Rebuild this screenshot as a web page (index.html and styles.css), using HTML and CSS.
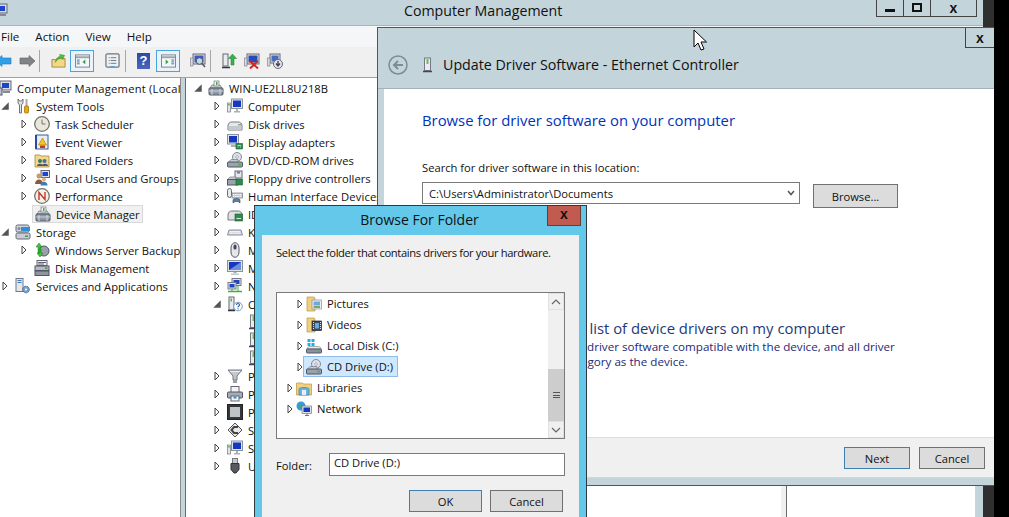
FILE: index.html
```html
<!DOCTYPE html>
<html lang="en">
<head>
    <meta charset="UTF-8">
    <title>Computer Management</title>
    <link rel="stylesheet" href="styles.css">
</head>
<body>
<svg class="sprite" width="0" height="0">
    <defs>
        <symbol id="tw-closed" viewBox="0 0 6 10"><path d="M1 1l4 4-4 4z" fill="#fff" stroke="#444"/></symbol>
        <symbol id="tw-open" viewBox="0 0 8 8"><path d="M7 1v6H1z" fill="#555"/></symbol>

        <symbol id="i-mgmt" viewBox="0 0 16 16"><rect x="4" y="1" width="11" height="9" fill="#d8dde2" stroke="#667"/><rect x="6" y="3" width="7" height="5" fill="#1c46c8"/><rect x="1" y="8" width="5" height="7" fill="#bcc4cc" stroke="#556"/><rect x="7" y="11" width="7" height="2" fill="#889"/></symbol>
        <symbol id="i-tools" viewBox="0 0 16 16"><path d="M3 1v4l1.500 2v8h2V7L8 5V1L6.500 3h-2z" fill="#dfe3e6" stroke="#555" stroke-width=".8"/><rect x="10.500" y="1" width="2" height="7" fill="#aab"/><rect x="9.500" y="8" width="4" height="7" rx="1" fill="#e8a90f" stroke="#9a6c00" stroke-width=".7"/></symbol>
        <symbol id="i-clock" viewBox="0 0 16 16"><circle cx="8" cy="8" r="7.300" fill="#e9e6dc" stroke="#77736a" stroke-width="1.300"/><path d="M8 3.500V8h3.500" fill="none" stroke="#77736a"/></symbol>
        <symbol id="i-event" viewBox="0 0 16 16"><rect x="2" y="1" width="12" height="14" fill="#e8edf5" stroke="#3a5a98"/><path d="M2 1v14" stroke="#2b4aa6" stroke-width="2"/><path d="M8.500 4l4 7h-8z" fill="#f2c81e" stroke="#a87a00" stroke-width=".6"/><rect x="6" y="11.500" width="5" height="2.500" fill="#c8352a"/></symbol>
        <symbol id="i-share" viewBox="0 0 16 16"><path d="M1 3h5l1 1h8v11H1z" fill="#f0d98c" stroke="#a48a3e" stroke-width=".8"/><circle cx="6" cy="9" r="2" fill="#3b7a57"/><circle cx="10.500" cy="9" r="2" fill="#3a6fb0"/><path d="M3 14c0-3 6-3 6 0zM8 14c0-3 6-3 6 0z" fill="#557"/></symbol>
        <symbol id="i-users" viewBox="0 0 16 16"><rect x="7" y="0.500" width="8.500" height="7" fill="#dfe4ea" stroke="#667"/><rect x="8.500" y="2" width="5.500" height="4" fill="#1c46c8"/><circle cx="5" cy="6" r="2.500" fill="#c89a6a"/><path d="M1 14c0-6 8-6 8 0z" fill="#8a5a3a"/><circle cx="10" cy="9.500" r="2" fill="#d9b080"/><path d="M6.500 15.500c0-5 7-5 7 0z" fill="#3a7cc0"/></symbol>
        <symbol id="i-perf" viewBox="0 0 16 16"><circle cx="8" cy="8" r="7.300" fill="#f3f1ea" stroke="#77736a" stroke-width="1.300"/><path d="M5 12V4.500l6 7V4" fill="none" stroke="#c8352a" stroke-width="1.400"/></symbol>
        <symbol id="i-server" viewBox="0 0 16 16"><path d="M2 8l2-3h8l2 3z" fill="#cfd4d9" stroke="#667" stroke-width=".7"/><rect x="6" y="1" width="5" height="5" fill="#eef2ee" stroke="#778" stroke-width=".7"/><rect x="8" y="2" width="1.500" height="3" fill="#4aa84a"/><rect x="1" y="8" width="14" height="7" rx="1" fill="#8c98a4" stroke="#556"/><path d="M1 11h14M4 9v6M12 9v6" stroke="#dfe4e8" stroke-width=".8"/></symbol>
        <symbol id="i-storage" viewBox="0 0 16 16"><rect x="1" y="9" width="14" height="6" rx="1.500" fill="#c8cdd2" stroke="#667"/><rect x="10" y="11.500" width="3" height="1.500" fill="#44a044"/><rect x="1" y="1" width="13" height="7" rx="1.500" fill="#d2d7dc" stroke="#667"/><rect x="6" y="3" width="9" height="4" fill="#2f8fd8"/><circle cx="4" cy="4.500" r="1.500" fill="#889"/></symbol>
        <symbol id="i-backup" viewBox="0 0 16 16"><circle cx="10" cy="9" r="5" fill="#99a0a8" stroke="#556"/><path d="M5 1l3 4H6v6H4V5H2zM6 15l-3-4h2V7h2v4h2z" fill="#3cc43c" stroke="#1f7a1f" stroke-width=".5"/></symbol>
        <symbol id="i-diskm" viewBox="0 0 16 16"><rect x="3" y="0.500" width="10" height="5" fill="#eef0f2" stroke="#667"/><path d="M4 2.500h8M4 4h6" stroke="#445" stroke-width=".8"/><rect x="1" y="6" width="14" height="4.500" fill="#b6bcc2" stroke="#556"/><rect x="11" y="7.500" width="2.500" height="1.500" fill="#44a044"/><rect x="1" y="11" width="14" height="4.500" fill="#8e969e" stroke="#556"/></symbol>
        <symbol id="i-services" viewBox="0 0 16 16"><rect x="1" y="0.500" width="7" height="13" fill="#e4e8ec" stroke="#778"/><path d="M2.500 2.500h4M2.500 4.500h4" stroke="#3a7cc0"/><circle cx="11" cy="11.500" r="3.300" fill="#7aa0c8" stroke="#3a5a88" stroke-dasharray="1.200 .6"/><circle cx="11" cy="11.500" r="1.100" fill="#fff"/></symbol>
        <symbol id="i-computer" viewBox="0 0 16 16"><rect x="0.500" y="5" width="3" height="9" fill="#e2e6e8" stroke="#778" stroke-width=".7"/><rect x="1.200" y="6" width="1.500" height="1.500" fill="#44b044"/><rect x="4.500" y="1" width="11" height="9.500" fill="#e2e6ea" stroke="#8a929a"/><rect x="6" y="2.500" width="8" height="6.500" fill="#1638c0"/><path d="M9 11h2v2h2v1.500H7V13h2z" fill="#a8b0b8"/></symbol>
        <symbol id="i-disk" viewBox="0 0 16 16"><path d="M1 10c0-3 2-4 4-4h6c2 0 4 1 4 4v4H1z" fill="#e6e8ea" stroke="#778"/><rect x="1.500" y="10" width="13" height="4" fill="#c4c9ce"/><rect x="11" y="8" width="3" height="1.500" fill="#8a9"/></symbol>
        <symbol id="i-display" viewBox="0 0 16 16"><rect x="0.500" y="0.500" width="11" height="9.500" fill="#e2e6ea" stroke="#8a929a"/><rect x="2" y="2" width="8" height="6.500" fill="#1638c0"/><rect x="4" y="11" width="5" height="2" fill="#a8b0b8"/><rect x="9" y="9.500" width="6.500" height="5.500" fill="#2f8a4e" stroke="#1e5a34" stroke-width=".6"/><path d="M10.500 13h1M13 13h1M10.500 11.500h3.500" stroke="#dcead8" stroke-width=".8"/></symbol>
        <symbol id="i-dvd" viewBox="0 0 16 16"><circle cx="10" cy="5" r="4.500" fill="#dde2e8" stroke="#889"/><circle cx="10" cy="5" r="1.300" fill="#fff" stroke="#889" stroke-width=".6"/><path d="M1 10.500l3-3h7v3z" fill="#c8cdd2" stroke="#778" stroke-width=".7"/><rect x="0.500" y="10" width="15" height="5" rx="1" fill="#9aa2aa" stroke="#556"/><rect x="11" y="11.800" width="3" height="1.500" fill="#4ab04a"/></symbol>
        <symbol id="i-floppy" viewBox="0 0 16 16"><rect x="8" y="1" width="7" height="7" fill="#e4e8ec" stroke="#667"/><rect x="10" y="1.500" width="3" height="2" fill="#778"/><path d="M1 9l2-2h6v3H1z" fill="#c8cdd2" stroke="#778" stroke-width=".7"/><rect x="0.500" y="9.500" width="10" height="5.500" fill="#9aa2aa" stroke="#556"/><rect x="9" y="9" width="6.500" height="6" fill="#2f8a4e" stroke="#1e5a34" stroke-width=".6"/></symbol>
        <symbol id="i-hid" viewBox="0 0 16 16"><rect x="0.500" y="0.500" width="4" height="9" rx="2" fill="#e8eaec" stroke="#667"/><rect x="5" y="5" width="10.500" height="5" fill="#c8ccd2" stroke="#778" stroke-width=".7"/><path d="M6 6.500h8.500M6 8.500h8.500" stroke="#fff" stroke-dasharray="1 .8"/><path d="M6 15v-3c0-2 7-2 7 0v3l-2-1.500H8z" fill="#5a80b0" stroke="#345" stroke-width=".6"/></symbol>
        <symbol id="i-ide" viewBox="0 0 16 16"><path d="M1 9c0-3 2-4 4-4h6c2 0 4 1 4 4v5H1z" fill="#dfe2e5" stroke="#778"/><rect x="8" y="8" width="7.500" height="7" fill="#2f8a4e" stroke="#1e5a34" stroke-width=".6"/><path d="M9.500 12.500h4.500" stroke="#dcead8"/></symbol>
        <symbol id="i-keyboard" viewBox="0 0 16 16"><path d="M2 6h12l1.500 5h-15z" fill="#d6dade" stroke="#778" stroke-width=".8"/><path d="M3 7.500h10M2.500 9.300h11" stroke="#fff" stroke-dasharray="1 .6"/></symbol>
        <symbol id="i-mouse" viewBox="0 0 16 16"><path d="M4 6c0-7 8-7 8 0v4c0 7-8 7-8 0z" fill="#e4e6ea" stroke="#556"/><rect x="6.500" y="2.500" width="3" height="5" rx="1.500" fill="#445"/></symbol>
        <symbol id="i-monitor" viewBox="0 0 16 16"><rect x="0.500" y="0.500" width="15" height="11" fill="#dfe3e8" stroke="#8a929a"/><rect x="2" y="2" width="12" height="8" fill="#1638c0"/><path d="M2 10l12-8v8z" fill="#6c8ce0"/><rect x="6.500" y="12" width="3" height="1.500" fill="#a8b0b8"/><rect x="4" y="13.500" width="8" height="1.500" fill="#c4c9ce"/></symbol>
        <symbol id="i-network" viewBox="0 0 16 16"><rect x="5" y="0.500" width="9" height="7" fill="#dfe3e8" stroke="#778"/><rect x="6.500" y="2" width="6" height="4" fill="#1c46c8"/><rect x="1" y="4.500" width="8" height="6.500" fill="#dfe3e8" stroke="#778"/><rect x="2.500" y="6" width="5" height="3.500" fill="#1c46c8"/><path d="M1 13.500h14" stroke="#3cb03c" stroke-width="1.500"/><path d="M5 11v2M11 8v5" stroke="#3cb03c"/></symbol>
        <symbol id="i-other" viewBox="0 0 16 16"><rect x="2" y="1" width="5" height="13" fill="#e8ecea" stroke="#667"/><rect x="3.500" y="2.500" width="1.500" height="3" fill="#5ab05a"/><path d="M1 14.500h7" stroke="#334" stroke-width="1.500"/><circle cx="11" cy="10.500" r="4.300" fill="#fff" stroke="#7a9ac0"/><path d="M9.500 9c0-2 3-2 3 0 0 1-1.500 1-1.500 2.300M11 12.300v1" fill="none" stroke="#2b5aa6" stroke-width="1.100"/></symbol>
        <symbol id="i-eth" viewBox="0 0 16 16"><rect x="4.500" y="1" width="6" height="12.500" fill="#e8ecea" stroke="#778"/><rect x="6.500" y="2" width="2" height="5" fill="#66c05a"/><path d="M3 14.500h9" stroke="#445" stroke-width="1.500"/></symbol>
        <symbol id="i-port" viewBox="0 0 16 16"><path d="M1 2h14l-5 6v4H6V8z" fill="#c4c8cc" stroke="#778"/><rect x="6" y="12" width="4" height="3" fill="#99a0a6"/><path d="M3 3.500h10" stroke="#eee"/></symbol>
        <symbol id="i-printer" viewBox="0 0 16 16"><rect x="4" y="0.500" width="8" height="6" fill="#f2f4f6" stroke="#667"/><rect x="0.500" y="6" width="15" height="6" rx="1" fill="#a4acb4" stroke="#556"/><rect x="4" y="10" width="8" height="5" fill="#f2f4f6" stroke="#667"/><rect x="6.500" y="10.500" width="3" height="2" fill="#2f8fd8"/></symbol>
        <symbol id="i-cpu" viewBox="0 0 16 16"><rect x="0.500" y="0.500" width="15" height="15" fill="#34383c" stroke="#222"/><rect x="3" y="3" width="10" height="10" fill="#c0c4c8"/></symbol>
        <symbol id="i-soft" viewBox="0 0 16 16"><path d="M8 1l7 7-7 7-7-7z" fill="#e8e8e8" stroke="#555"/><path d="M11 5H7L4.500 8 7 11h4" fill="none" stroke="#444" stroke-width="2"/></symbol>
        <symbol id="i-usb" viewBox="0 0 16 16"><rect x="5.500" y="0.500" width="5" height="5" fill="#c4c8cc" stroke="#778"/><path d="M4 5.500h8v6l-3 3.500H7l-3-3.500z" fill="#55595e" stroke="#333"/></symbol>

        <symbol id="i-pictures" viewBox="0 0 16 16"><path d="M1 1h7l1 1v13H1z" fill="#f0d07c" stroke="#b8983e" stroke-width=".7"/><rect x="6" y="4" width="9.500" height="9" fill="#eef2f6" stroke="#889" stroke-width=".7"/><rect x="7.500" y="5.500" width="6.500" height="4" fill="#6ea8d8"/><path d="M7.500 11h6.500" stroke="#7aa860" stroke-width="2"/></symbol>
        <symbol id="i-videos" viewBox="0 0 16 16"><path d="M1 1h7l1 1v13H1z" fill="#f0d07c" stroke="#b8983e" stroke-width=".7"/><rect x="6" y="4" width="9.500" height="9.500" fill="#3a4a5e" stroke="#223" stroke-width=".7"/><rect x="9" y="6" width="4" height="5.500" fill="#6ea8d8"/><path d="M7.500 5v8M14.500 5v8" stroke="#dde" stroke-dasharray="1 1"/></symbol>
        <symbol id="i-cdisk" viewBox="0 0 16 16"><rect x="1.500" y="1" width="3" height="3" fill="#18b0ec"/><rect x="5.500" y="1" width="3" height="3" fill="#18b0ec"/><rect x="1.500" y="5" width="3" height="3" fill="#18b0ec"/><rect x="5.500" y="5" width="3" height="3" fill="#18b0ec"/><path d="M1 10l2-1.500h10l2 1.500v1H1z" fill="#e8eaec" stroke="#8a9098" stroke-width=".7"/><rect x="0.500" y="11" width="15" height="4" rx="1" fill="#8a949e" stroke="#556"/><rect x="11.500" y="12.500" width="2.500" height="1.200" fill="#4ab04a"/></symbol>
        <symbol id="i-libraries" viewBox="0 0 16 16"><path d="M0.500 3h6l1 1h8v11H.5z" fill="#f0d07c" stroke="#b8983e" stroke-width=".7"/><path d="M3 15V9c0-2 10-2 10 0v6z" fill="#6ab4e0" stroke="#3a7cb0" stroke-width=".7"/><rect x="6" y="10" width="4" height="5" fill="#e8eef4"/></symbol>
        <symbol id="i-globe" viewBox="0 0 16 16"><circle cx="5" cy="5" r="4.500" fill="#3a9ad8"/><path d="M2 2.500c3 0 3 3 1 4 2 1 3 0 4-2" fill="#3cb043"/><rect x="6" y="5" width="9.500" height="7.500" fill="#dfe3e8" stroke="#778" stroke-width=".7"/><rect x="7.500" y="6.500" width="6.500" height="4.500" fill="#1638c0"/><path d="M9 14.500h4M11 12.500v2" stroke="#778"/></symbol>

        <symbol id="t-folder" viewBox="0 0 16 16"><path d="M1 7h4l1-1h9v9H1z" fill="#f2d888" stroke="#a48a3e"/><path d="M4.500 10c.5-4 3-6 5.500-6.500L9 1.500l5.500 1-2 4.500-1-2c-2.500.5-5 2-7 5z" fill="#4fc23a" stroke="#2a8a2a" stroke-width=".5"/></symbol>
        <symbol id="t-pane" viewBox="0 0 16 14"><rect x="0.500" y="0.500" width="15" height="13" fill="#f4f6f8" stroke="#7a8288"/><path d="M1 3h14" stroke="#9aa2aa" stroke-width="2"/><path d="M2 6h3M2 8h3M2 10h3" stroke="#3a6fa8"/><path d="M11 5.500v5L8 8z" fill="#2ea043"/></symbol>
        <symbol id="t-pane2" viewBox="0 0 16 14"><rect x="0.500" y="0.500" width="15" height="13" fill="#f4f6f8" stroke="#7a8288"/><path d="M1 3h14" stroke="#9aa2aa" stroke-width="2"/><path d="M11 6h3M11 8h3M11 10h3" stroke="#3a6fa8"/><path d="M5 5.500v5L8 8z" fill="#2ea043"/></symbol>
        <symbol id="t-doc" viewBox="0 0 16 16"><rect x="1" y="1" width="14" height="14" rx="1.500" fill="#eef1f3" stroke="#6e757b" stroke-width="1.300"/><path d="M4 5h1M6 5h6M4 8h1M6 8h6M4 11h1M6 11h6" stroke="#6a7680"/><path d="M6 14.500h4" stroke="#3fa0dc"/></symbol>
        <symbol id="t-search" viewBox="0 0 16 16"><rect x="3" y="1" width="12" height="10" fill="#dfe3e8" stroke="#667"/><rect x="4.500" y="2.500" width="9" height="7" fill="#3a5ac0"/><circle cx="9.500" cy="8" r="3.300" fill="#bcd8ee" stroke="#556"/><path d="M12 10.500l3 3.500" stroke="#556" stroke-width="1.500"/><rect x="0.500" y="5" width="2.500" height="8" fill="#d6dadc" stroke="#778" stroke-width=".6"/></symbol>
        <symbol id="t-update" viewBox="0 0 16 16"><rect x="2" y="1" width="5" height="12" fill="#e8ecea" stroke="#667"/><path d="M1 14.500h8" stroke="#334" stroke-width="1.500"/><path d="M11.500 1l4 4.500H13V12h-3V5.500H7.500z" fill="#36b44a" stroke="#1f7a2f" stroke-width=".5"/></symbol>
        <symbol id="t-remove" viewBox="0 0 16 16"><rect x="3" y="1" width="12" height="10" fill="#dfe3e8" stroke="#667"/><rect x="4.500" y="2.500" width="9" height="7" fill="#2a4ab8"/><rect x="0.500" y="5" width="2.500" height="8" fill="#d6dadc" stroke="#778" stroke-width=".6"/><path d="M6 8l8 7.500M14 8l-8 7.500" stroke="#d8201c" stroke-width="2"/></symbol>
        <symbol id="t-install" viewBox="0 0 16 16"><rect x="3" y="1" width="10" height="9" fill="#dfe3e8" stroke="#667"/><rect x="4.500" y="2.500" width="7" height="6" fill="#4a6ac0"/><rect x="0.500" y="5" width="2.500" height="8" fill="#d6dadc" stroke="#778" stroke-width=".6"/><circle cx="11" cy="11" r="4.500" fill="#e4e6e8" stroke="#667"/><path d="M11 8v4M9 10.500l2 2.500 2-2.500" fill="none" stroke="#445" stroke-width="1.400"/></symbol>
    </defs>
</svg>

<div class="desktop">

    <div class="main-win">
        <div class="titlebar">
            <svg class="app-icon"><use href="#i-mgmt"/></svg>
            <span class="titlebar-text">Computer Management</span>
            <div class="win-btns">
                <span class="win-btn"><i class="ico-min"></i></span>
                <span class="win-btn btn-max"><i class="ico-max"></i></span>
                <span class="win-btn btn-x">x</span>
            </div>
        </div>
        <div class="menubar">
            <span>File</span><span>Action</span><span>View</span><span>Help</span>
        </div>
        <div class="toolbar">
            <svg class="tool-back" viewBox="0 0 16 12"><path d="M0 6l6-5.500V3h9v6H6v2.500z" fill="#2f9fe8" stroke="#1a7ac0" stroke-width=".6"/></svg>
            <svg class="tool-fwd" viewBox="0 0 16 12"><path d="M16 6l-6-5.500V3H1v6h9v2.500z" fill="#808488" stroke="#5a5e62" stroke-width=".6"/></svg>
            <i class="tool-sep"></i>
            <svg class="tool"><use href="#t-folder"/></svg>
            <span class="tool-on"><svg class="tool-in"><use href="#t-pane"/></svg></span>
            <svg class="tool tool-doc"><use href="#t-doc"/></svg>
            <i class="tool-sep sep2"></i>
            <span class="tool-help">?</span>
            <span class="tool-on on2"><svg class="tool-in"><use href="#t-pane2"/></svg></span>
            <svg class="tool tool-search"><use href="#t-search"/></svg>
            <i class="tool-sep sep3"></i>
            <svg class="tool tool-up"><use href="#t-update"/></svg>
            <svg class="tool tool-x"><use href="#t-remove"/></svg>
            <svg class="tool tool-x"><use href="#t-install"/></svg>
        </div>
        <div class="panes">
            <div class="pane-left">
                <div class="row lv0"><i class="tw"></i><svg class="ic"><use href="#i-mgmt"/></svg><span class="lbl wide-root">Computer Management (Local</span></div>
                <div class="row lv1"><svg class="tw"><use href="#tw-open"/></svg><svg class="ic"><use href="#i-tools"/></svg><span class="lbl">System Tools</span></div>
                <div class="row lv2"><svg class="tw"><use href="#tw-closed"/></svg><svg class="ic"><use href="#i-clock"/></svg><span class="lbl">Task Scheduler</span></div>
                <div class="row lv2"><svg class="tw"><use href="#tw-closed"/></svg><svg class="ic"><use href="#i-event"/></svg><span class="lbl">Event Viewer</span></div>
                <div class="row lv2"><svg class="tw"><use href="#tw-closed"/></svg><svg class="ic"><use href="#i-share"/></svg><span class="lbl">Shared Folders</span></div>
                <div class="row lv2"><svg class="tw"><use href="#tw-closed"/></svg><svg class="ic"><use href="#i-users"/></svg><span class="lbl">Local Users and Groups</span></div>
                <div class="row lv2"><svg class="tw"><use href="#tw-closed"/></svg><svg class="ic"><use href="#i-perf"/></svg><span class="lbl">Performance</span></div>
                <div class="row lv2"><i class="tw"></i><span class="sel-item"><svg class="ic"><use href="#i-server"/></svg><span class="lbl">Device Manager</span></span></div>
                <div class="row lv1"><svg class="tw"><use href="#tw-open"/></svg><svg class="ic"><use href="#i-storage"/></svg><span class="lbl">Storage</span></div>
                <div class="row lv2"><svg class="tw"><use href="#tw-closed"/></svg><svg class="ic"><use href="#i-backup"/></svg><span class="lbl">Windows Server Backup</span></div>
                <div class="row lv2"><i class="tw"></i><svg class="ic"><use href="#i-diskm"/></svg><span class="lbl">Disk Management</span></div>
                <div class="row lv1"><svg class="tw"><use href="#tw-closed"/></svg><svg class="ic"><use href="#i-services"/></svg><span class="lbl">Services and Applications</span></div>
            </div>
            <div class="pane-center">
                <div class="row lv1"><svg class="tw"><use href="#tw-open"/></svg><svg class="ic"><use href="#i-server"/></svg><span class="lbl">WIN-UE2LL8U218B</span></div>
                <div class="row lv2"><svg class="tw"><use href="#tw-closed"/></svg><svg class="ic"><use href="#i-computer"/></svg><span class="lbl">Computer</span></div>
                <div class="row lv2"><svg class="tw"><use href="#tw-closed"/></svg><svg class="ic"><use href="#i-disk"/></svg><span class="lbl">Disk drives</span></div>
                <div class="row lv2"><svg class="tw"><use href="#tw-closed"/></svg><svg class="ic"><use href="#i-display"/></svg><span class="lbl">Display adapters</span></div>
                <div class="row lv2"><svg class="tw"><use href="#tw-closed"/></svg><svg class="ic"><use href="#i-dvd"/></svg><span class="lbl">DVD/CD-ROM drives</span></div>
                <div class="row lv2"><svg class="tw"><use href="#tw-closed"/></svg><svg class="ic"><use href="#i-floppy"/></svg><span class="lbl">Floppy drive controllers</span></div>
                <div class="row lv2"><svg class="tw"><use href="#tw-closed"/></svg><svg class="ic"><use href="#i-hid"/></svg><span class="lbl wide">Human Interface Devices</span></div>
                <div class="row lv2"><svg class="tw"><use href="#tw-closed"/></svg><svg class="ic"><use href="#i-ide"/></svg><span class="lbl">IDE ATA/ATAPI controllers</span></div>
                <div class="row lv2"><svg class="tw"><use href="#tw-closed"/></svg><svg class="ic"><use href="#i-keyboard"/></svg><span class="lbl">Keyboards</span></div>
                <div class="row lv2"><svg class="tw"><use href="#tw-closed"/></svg><svg class="ic"><use href="#i-mouse"/></svg><span class="lbl">Mice and other pointing devices</span></div>
                <div class="row lv2"><svg class="tw"><use href="#tw-closed"/></svg><svg class="ic"><use href="#i-monitor"/></svg><span class="lbl">Monitors</span></div>
                <div class="row lv2"><svg class="tw"><use href="#tw-closed"/></svg><svg class="ic"><use href="#i-network"/></svg><span class="lbl">Network adapters</span></div>
                <div class="row lv2"><svg class="tw"><use href="#tw-open"/></svg><svg class="ic"><use href="#i-other"/></svg><span class="lbl">Other devices</span></div>
                <div class="row lv3"><i class="tw"></i><svg class="ic"><use href="#i-eth"/></svg><span class="lbl">Ethernet Controller</span></div>
                <div class="row lv3"><i class="tw"></i><svg class="ic"><use href="#i-eth"/></svg><span class="lbl">Ethernet Controller</span></div>
                <div class="row lv3"><i class="tw"></i><svg class="ic"><use href="#i-eth"/></svg><span class="lbl">Ethernet Controller</span></div>
                <div class="row lv2"><svg class="tw"><use href="#tw-closed"/></svg><svg class="ic"><use href="#i-port"/></svg><span class="lbl">Ports (COM &amp; LPT)</span></div>
                <div class="row lv2"><svg class="tw"><use href="#tw-closed"/></svg><svg class="ic"><use href="#i-printer"/></svg><span class="lbl">Print queues</span></div>
                <div class="row lv2"><svg class="tw"><use href="#tw-closed"/></svg><svg class="ic"><use href="#i-cpu"/></svg><span class="lbl">Processors</span></div>
                <div class="row lv2"><svg class="tw"><use href="#tw-closed"/></svg><svg class="ic"><use href="#i-soft"/></svg><span class="lbl">Software devices</span></div>
                <div class="row lv2"><svg class="tw"><use href="#tw-closed"/></svg><svg class="ic"><use href="#i-computer"/></svg><span class="lbl">System devices</span></div>
                <div class="row lv2"><svg class="tw"><use href="#tw-closed"/></svg><svg class="ic"><use href="#i-usb"/></svg><span class="lbl">Universal Serial Bus controllers</span></div>
            </div>
            <div class="pane-right"></div>
        </div>
    </div>

    <div class="update-win">
        <div class="update-top"><span class="win-btn close-solo">x</span></div>
        <div class="update-head">
            <svg class="back-btn" viewBox="0 0 20 20"><circle cx="10" cy="10" r="9" fill="none" stroke="#7f8c92" stroke-width="1.500"/><path d="M15 10H6M10 6l-4 4 4 4" fill="none" stroke="#7f8c92" stroke-width="2"/></svg>
            <svg class="head-ic"><use href="#i-eth"/></svg>
            <span class="head-title">Update Driver Software - Ethernet Controller</span>
        </div>
        <div class="update-body">
            <div class="u-heading">Browse for driver software on your computer</div>
            <div class="u-label">Search for driver software in this location:</div>
            <div class="u-pathrow">
                <div class="u-combo"><span>C:\Users\Administrator\Documents</span>
                    <svg class="chev" viewBox="0 0 8 6"><path d="M1 1l3 3.500L7 1" fill="none" stroke="#555" stroke-width="1.500"/></svg>
                </div>
                <span class="btn u-browse">Browse...</span>
            </div>
            <div class="u-link">Let me pick from a list of device drivers on my computer</div>
            <div class="u-desc">This list will show installed driver software compatible with the device, and all driver</div>
            <div class="u-desc u-desc2">software in the same category as the device.</div>
        </div>
        <div class="update-foot">
            <span class="btn btn-def">Next</span>
            <span class="btn">Cancel</span>
        </div>
    </div>

    <div class="folder-dlg">
        <div class="dlg-title">
            <span>Browse For Folder</span>
            <span class="dlg-close">x</span>
        </div>
        <div class="dlg-client">
            <div class="dlg-prompt">Select the folder that contains drivers for your hardware.</div>
            <div class="dlg-tree">
                <div class="dlg-rows">
                    <div class="frow in2"><svg class="tw"><use href="#tw-closed"/></svg><svg class="ic"><use href="#i-pictures"/></svg><span class="lbl">Pictures</span></div>
                    <div class="frow in2"><svg class="tw"><use href="#tw-closed"/></svg><svg class="ic"><use href="#i-videos"/></svg><span class="lbl">Videos</span></div>
                    <div class="frow in2"><svg class="tw"><use href="#tw-closed"/></svg><svg class="ic"><use href="#i-cdisk"/></svg><span class="lbl">Local Disk (C:)</span></div>
                    <div class="frow in2"><svg class="tw"><use href="#tw-closed"/></svg><span class="frow-sel"><svg class="ic"><use href="#i-dvd"/></svg><span class="lbl">CD Drive (D:)</span></span></div>
                    <div class="frow in1"><svg class="tw"><use href="#tw-closed"/></svg><svg class="ic"><use href="#i-libraries"/></svg><span class="lbl">Libraries</span></div>
                    <div class="frow in1"><svg class="tw"><use href="#tw-closed"/></svg><svg class="ic"><use href="#i-globe"/></svg><span class="lbl">Network</span></div>
                </div>
                <div class="scroll">
                    <span class="sc-btn"><svg viewBox="0 0 10 6"><path d="M1 5l4-4 4 4" fill="none" stroke="#666" stroke-width="1.200"/></svg></span>
                    <span class="sc-track"></span>
                    <span class="sc-thumb"><i></i></span>
                    <span class="sc-btn"><svg viewBox="0 0 10 6"><path d="M1 1l4 4 4-4" fill="none" stroke="#666" stroke-width="1.200"/></svg></span>
                </div>
            </div>
            <div class="dlg-folder">
                <span class="dlg-flabel">Folder:</span>
                <div class="dlg-input">CD Drive (D:)</div>
            </div>
            <div class="dlg-btns">
                <span class="btn btn-def">OK</span>
                <span class="btn">Cancel</span>
            </div>
        </div>
    </div>

    <svg class="cursor" viewBox="0 0 14 22"><path d="M1 1v17l4-4 3 7 3-1-3-7h5.500z" fill="#fff" stroke="#000"/></svg>
</div>
</body>
</html>
```

FILE: styles.css
```css
* {
    box-sizing: border-box;
}

html, body {
    margin: 0;
    height: 100%;
    background: #000;
}

body {
    font-family: "Open Sans", "Liberation Sans", sans-serif;
    font-size: 11.2px;
    color: #111;
}

.sprite {
    position: absolute;
}

i {
    display: block;
}

.desktop {
    position: relative;
    width: 1009px;
    height: 517px;
    overflow: hidden;
    background: #000;
}

/* main window */
.main-win {
    position: absolute;
    left: 0;
    top: 0;
    width: 994px;
    height: 517px;
    border-right: 11px solid #2f2f2f;
    background: #c3d5db;
    display: flex;
    flex-direction: column;
}

.titlebar {
    height: 26px;
    flex: none;
    display: flex;
    border-bottom: 1px solid #a8b4ba;
}

.app-icon {
    width: 16px;
    height: 16px;
    margin: 3px 0 0 -8px;
}

.titlebar-text {
    margin: 1px 0 0 396px;
    font-size: 14.2px;
    line-height: 20px;
}

.win-btns {
    margin-left: auto;
    margin-right: 6px;
    display: flex;
}

.win-btn {
    height: 17px;
    width: 28px;
    border: 1px solid #444;
    border-top: 0;
    display: flex;
    justify-content: center;
    align-items: center;
    font: bold 14px "Liberation Sans", sans-serif;
    color: #111;
}

.btn-max {
    width: 27px;
    border-left: 0;
}

.btn-x {
    width: 46px;
    border-left: 0;
}

.ico-min {
    width: 10px;
    height: 3px;
    margin-top: 5px;
    background: #111;
}

.ico-max {
    width: 10px;
    height: 9px;
    border: 2px solid #111;
    margin-top: -2px;
}

.menubar {
    height: 21px;
    flex: none;
    background: #f5f6f7;
    display: flex;
    gap: 16px;
    padding-left: 1px;
    align-items: center;
    font-size: 11.6px;
}

.toolbar {
    height: 31px;
    flex: none;
    background: #f0f0f0;
    border-bottom: 1px solid #a0a0a0;
    display: flex;
    align-items: center;
    padding-bottom: 3px;
}

.tool-back {
    width: 16px;
    height: 12px;
    margin-left: -4px;
}

.tool-fwd {
    width: 16px;
    height: 12px;
    margin-left: 7px;
}

.tool-sep {
    width: 1px;
    height: 22px;
    background: #a8a8a8;
    margin-left: 4px;
}

.tool {
    width: 15px;
    height: 15px;
    margin-left: 11px;
}

.tool-on {
    width: 24px;
    height: 22px;
    margin-left: 4px;
    border: 1px solid #4aa3de;
    background: #eaf3fa;
    display: flex;
    justify-content: center;
    align-items: center;
}

.tool-in {
    width: 15px;
    height: 14px;
}

.tool-doc {
    margin-left: 11px;
}

.sep2 {
    margin-left: 5px;
}

.tool-help {
    width: 13px;
    height: 16px;
    margin-left: 11px;
    background: linear-gradient(#2b4aa6, #4a66bc);
    color: #fff;
    font: bold 13px/16px "Liberation Sans", sans-serif;
    text-align: center;
}

.on2 {
    margin-left: 6px;
}

.tool-search {
    margin-left: 10px;
    width: 16px;
    height: 16px;
}

.sep3 {
    margin-left: 4px;
}

.tool-up {
    margin-left: 10px;
    width: 16px;
    height: 16px;
}

.tool-x {
    margin-left: 7px;
    width: 16px;
    height: 16px;
}

.panes {
    flex: 1;
    display: flex;
    min-height: 0;
    padding-right: 8px;
}

.pane-left {
    width: 181px;
    flex: none;
    background: #fff;
    border-right: 1px solid #8c8c8c;
    overflow: hidden;
    padding-top: 1px;
}

.pane-center {
    margin-left: 4px;
    width: 601px;
    flex: none;
    background: #fff;
    border-left: 1px solid #6a6a6a;
    border-right: 5px solid #f0f0f0;
    overflow: hidden;
    padding: 1px 0 0 7px;
}

.pane-right {
    margin-left: 0;
    flex: 1;
    background: #fff;
    border-left: 1px solid #6a6a6a;
}

.row {
    height: 18px;
    display: flex;
    align-items: center;
    white-space: nowrap;
}

.lv0 {
    margin-left: -19px;
}

.lv2 {
    margin-left: 19px;
}

.lv3 {
    margin-left: 38px;
}

.tw {
    width: 10px;
    height: 10px;
    flex: none;
    margin-right: 5px;
}

.ic {
    width: 16px;
    height: 16px;
    flex: none;
}

.lbl {
    margin-left: 5px;
}

.wide {
    letter-spacing: .14px;
}

.wide-root {
    letter-spacing: .22px;
}

.sel-item {
    display: flex;
    align-items: center;
    margin-left: -2px;
    padding: 0 2px;
    height: 18px;
    background: #f0f0f0;
    border: 1px solid #d9d9d9;
}

/* update driver wizard */
.update-win {
    position: absolute;
    left: 377px;
    top: 27px;
    width: 617px;
    height: 459px;
    background: #c3d5db;
    border-top: 1px solid #555;
    border-left: 1px solid #555;
    border-bottom: 1px solid #555;
    display: flex;
    flex-direction: column;
    padding-bottom: 7px;
}

.update-top {
    height: 20px;
    flex: none;
    display: flex;
    justify-content: flex-end;
}

.close-solo {
    width: 29px;
    height: 20px;
    border-right: 0;
}

.update-head {
    height: 41px;
    flex: none;
    display: flex;
    align-items: center;
    border-bottom: 1px solid #a4b0b6;
    padding-bottom: 7px;
}

.back-btn {
    width: 20px;
    height: 20px;
    margin-left: 10px;
}

.head-ic {
    width: 16px;
    height: 16px;
    margin-left: 12px;
}

.head-title {
    margin-left: 7px;
    font-size: 14.25px;
}

.update-body {
    height: 348px;
    flex: none;
    margin-left: 6px;
    background: #fff;
    padding: 21px 0 0 38px;
}

.u-heading {
    font-size: 14.85px;
    line-height: 20px;
    color: #0033bc;
}

.u-label {
    margin-top: 30px;
    line-height: 16px;
}

.u-pathrow {
    display: flex;
    margin-top: 6px;
}

.u-combo {
    width: 378px;
    height: 22px;
    border: 1px solid #7a7a7a;
    display: flex;
    align-items: center;
    justify-content: space-between;
    padding: 0 4px 0 6px;
}

.chev {
    width: 8px;
    height: 6px;
}

.btn {
    width: 74px;
    height: 22px;
    background: #dcdcdc;
    border: 1px solid #707070;
    display: flex;
    align-items: center;
    justify-content: center;
}

.btn-def {
    border-color: #3c7fb1;
}

.u-browse {
    width: 85px;
    height: 24px;
    margin: 2px 0 0 13px;
}

.u-link {
    margin: 110px 0 0 35px;
    font-size: 14.85px;
    line-height: 20px;
    color: #1c3a78;
    white-space: nowrap;
}

.u-desc {
    margin-left: 20px;
    font-size: 11.65px;
    line-height: 15px;
    color: #1c2a78;
    white-space: nowrap;
}

.u-link + .u-desc {
    margin-top: 1px;
}

.u-desc2 {
    margin-left: 26px;
}

.update-foot {
    flex: 1;
    margin-left: 6px;
    background: #f0f0f0;
    border-top: 1px solid #dcdcdc;
    border-bottom: 1px solid #d0d8da;
    display: flex;
    justify-content: flex-end;
    gap: 9px;
    padding: 9px 9px 0 0;
}

.update-foot .btn {
    width: 66px;
}

/* browse for folder */
.folder-dlg {
    position: absolute;
    left: 254px;
    top: 205px;
    width: 333px;
    height: 330px;
    background: #63c8ea;
    border: 1px solid #2f3a40;
    padding: 0 7px;
}

.dlg-title {
    height: 29px;
    display: flex;
    justify-content: center;
    align-items: center;
    position: relative;
    font-size: 14px;
    padding: 0 2px 2px 0;
}

.dlg-close {
    position: absolute;
    right: -2px;
    top: 0;
    width: 34px;
    height: 20px;
    background: #c15b50;
    border: 1px solid #6a3a36;
    border-top: 0;
    text-align: center;
    font: bold 14px/16px "Liberation Sans", sans-serif;
    color: #111;
}

.dlg-client {
    height: 290px;
    background: #f0f0f0;
    padding: 10px 14px 0;
}

.dlg-prompt {
    line-height: 16px;
    white-space: nowrap;
    letter-spacing: -.36px;
}

.dlg-tree {
    margin-top: 31px;
    width: 289px;
    height: 147px;
    background: #fff;
    border: 1px solid #7a7a7a;
    display: flex;
}

.dlg-rows {
    flex: 1;
    padding-top: 0;
}

.frow {
    height: 21px;
    display: flex;
    align-items: center;
    white-space: nowrap;
}

.frow .tw {
    margin-right: 2px;
    width: 8px;
}

.in1 {
    padding-left: 9px;
}

.in2 {
    padding-left: 19px;
}

.frow-sel {
    display: flex;
    align-items: center;
    height: 21px;
    width: 95px;
    margin-left: -3px;
    padding-left: 2px;
    background: #cde8ff;
    border: 1px solid #8fbce8;
}

.scroll {
    width: 17px;
    flex: none;
    display: flex;
    flex-direction: column;
    background: #f0f0f0;
    border-left: 1px solid #fff;
}

.sc-btn {
    height: 17px;
    flex: none;
    display: flex;
    align-items: center;
    justify-content: center;
    border: 1px solid #e0e0e0;
}

.sc-btn svg {
    width: 10px;
    height: 6px;
}

.sc-track {
    height: 59px;
    flex: none;
}

.sc-thumb {
    flex: 1;
    background: #cdcdcd;
    display: flex;
    align-items: center;
    justify-content: center;
}

.sc-thumb i {
    width: 7px;
    height: 6px;
    border-top: 1px solid #555;
    border-bottom: 1px solid #555;
    background: linear-gradient(#cdcdcd 2px, #555 2px, #555 3px, #cdcdcd 3px);
}

.dlg-folder {
    display: flex;
    align-items: center;
    margin-top: 14px;
}

.dlg-flabel {
    width: 53px;
    flex: none;
    padding-top: 1px;
}

.dlg-input {
    width: 236px;
    height: 23px;
    background: #fff;
    border: 1px solid #7a7a7a;
    padding: 1px 4px;
}

.dlg-btns {
    display: flex;
    justify-content: flex-end;
    gap: 8px;
    margin: 14px 1px 0 0;
    padding-right: 1px;
}

.dlg-btns .btn {
    width: 73px;
}

.cursor {
    position: absolute;
    left: 693px;
    top: 29px;
    width: 14px;
    height: 22px;
}
```
